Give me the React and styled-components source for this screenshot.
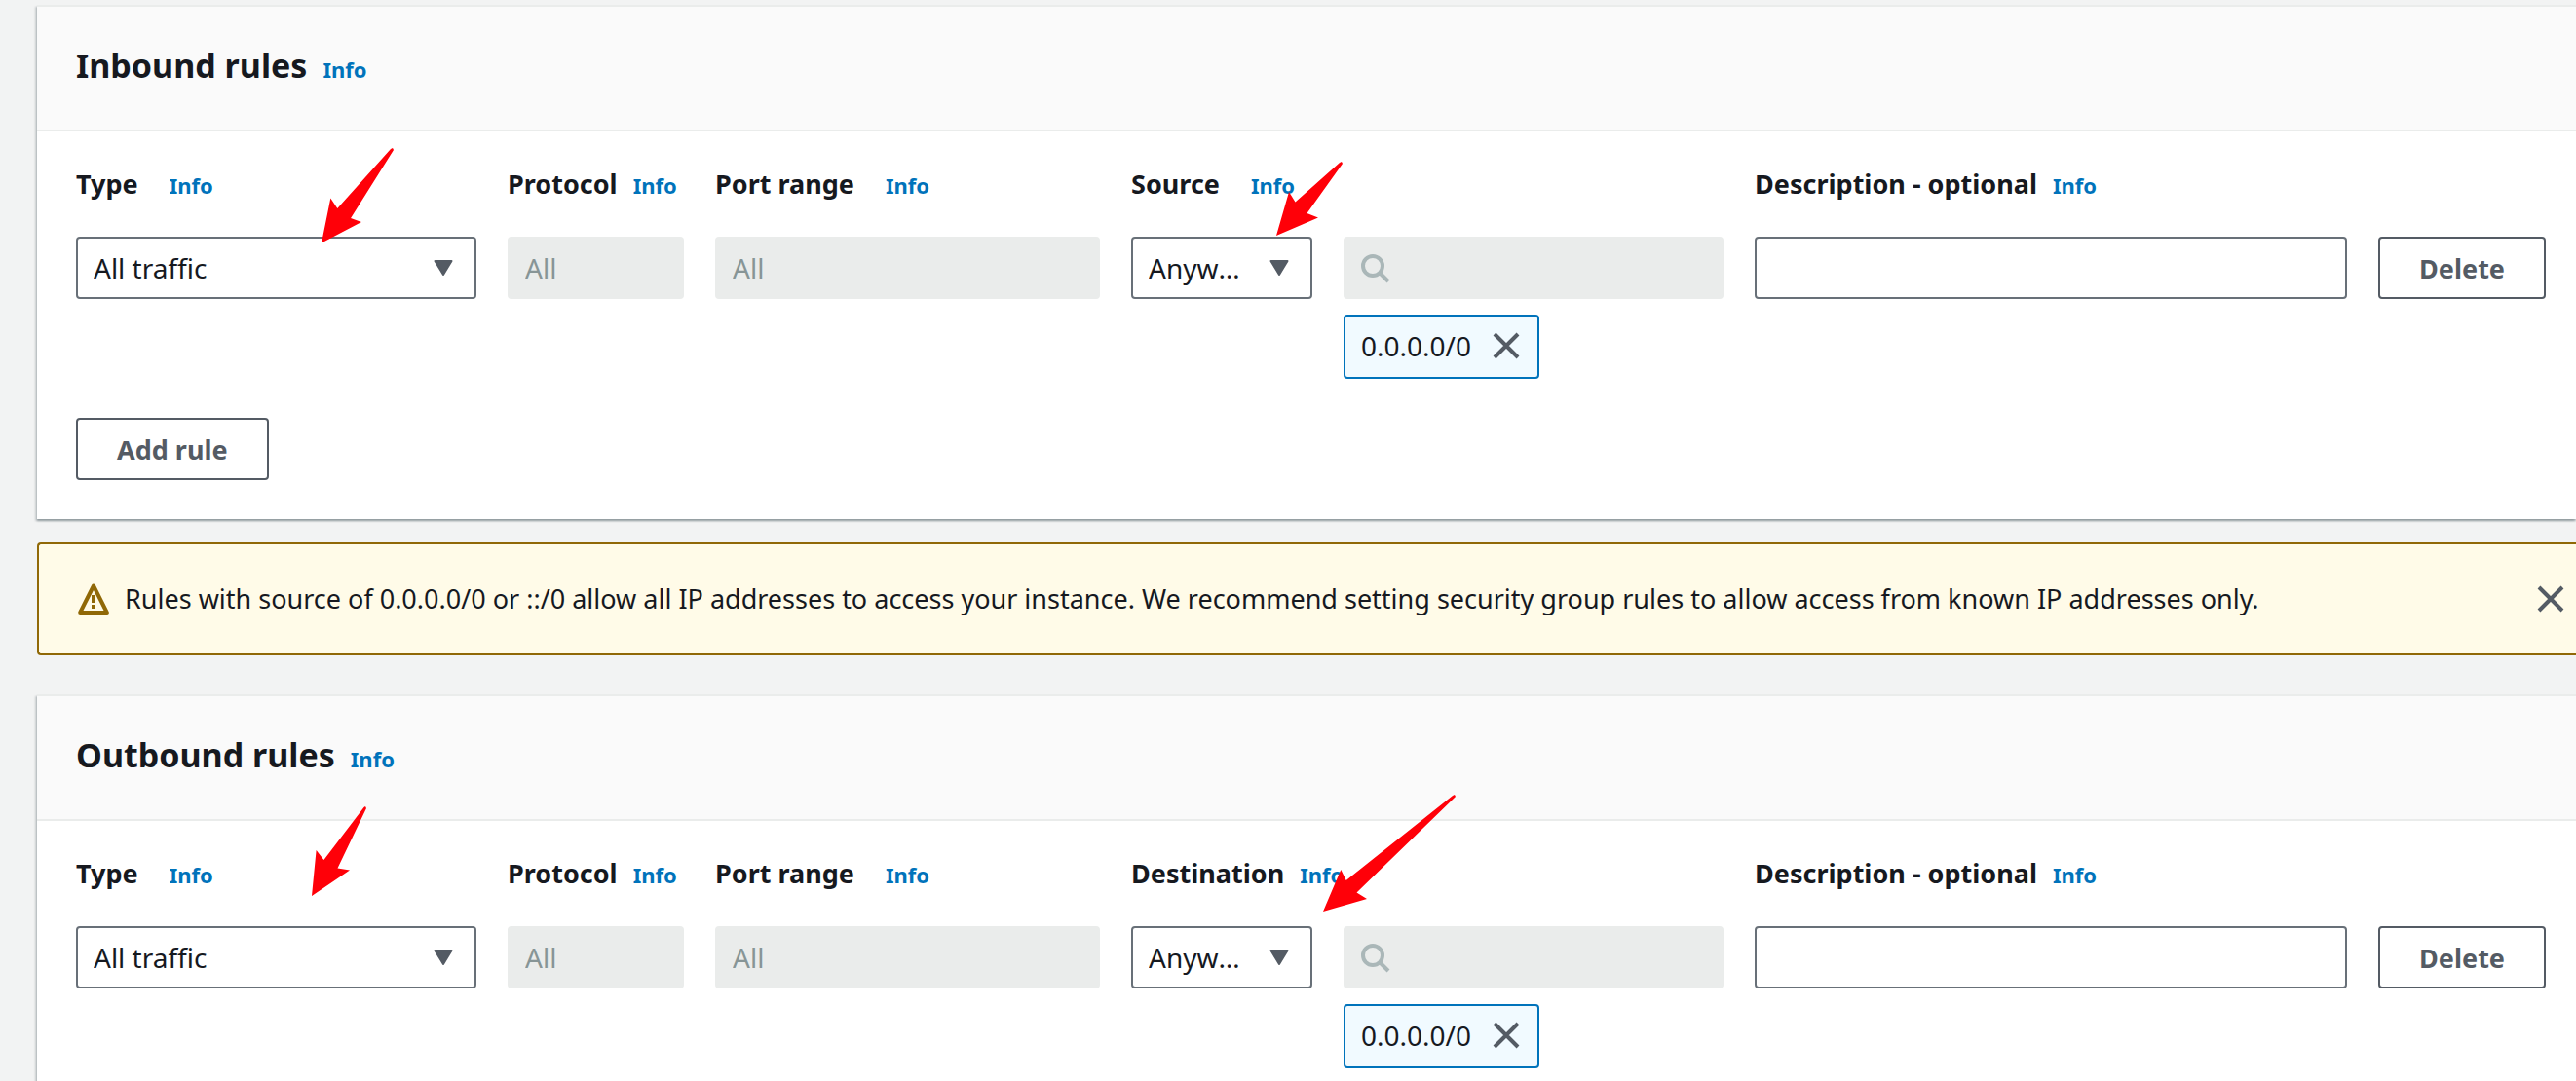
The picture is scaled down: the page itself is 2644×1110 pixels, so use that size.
import React from "react";
import styled, { createGlobalStyle, css } from "styled-components";

const color = {
  page: "#f2f3f3",
  panel: "#ffffff",
  header: "#fafafa",
  divider: "#eaeceb",
  text: "#16191f",
  muted: "#879596",
  disabled: "#eaeceb",
  control: "#687078",
  button: "#545b64",
  link: "#0073bb",
  warning: "#906806",
};

const GlobalStyle = createGlobalStyle`
  *, *::before, *::after { box-sizing: border-box; }
  body {
    margin: 0;
    background: ${color.page};
    color: ${color.text};
    font-family: "Noto Sans", "Open Sans", sans-serif;
    font-size: 28px;
  }
  input, select, button { font-family: inherit; margin: 0; }
`;

const Page = styled.main`
  position: relative;
  height: 100vh;
  overflow: hidden;
  padding: 5px 0 0 38px;
`;

const Panel = styled.section`
  background: ${color.panel};
  border-top: 2px solid ${color.divider};
  box-shadow: 0 2px 2px rgba(0, 28, 36, 0.3), -2px 2px 2px rgba(0, 28, 36, 0.15);
`;

const PanelHeader = styled.header`
  display: flex;
  align-items: baseline;
  gap: 16px;
  padding: 38px 40px 44px;
  background: ${color.header};
  border-bottom: 2px solid ${color.divider};
`;

const Title = styled.h2`
  margin: 0;
  font-size: 34px;
  font-weight: 700;
  line-height: 44px;
`;

const InfoLink = styled.a`
  color: ${color.link};
  font-size: 22px;
  font-weight: 700;
  line-height: 32px;
  text-decoration: none;
`;

const PanelBody = styled.div`
  display: flex;
  flex-direction: column;
  align-items: stretch;
  gap: 40px;
  padding: 34px 31px 40px 40px;
`;

const RuleGrid = styled.div`
  display: grid;
  grid-template-columns: 411fr 181fr 395fr 608fr 608fr auto;
  gap: 34px 32px;
  align-items: start;
`;

const LabelCell = styled.div`
  grid-row: 1;
  display: flex;
  align-items: baseline;
  gap: ${(p) => (p.$wide ? "32px" : "16px")};
  min-width: 0;
  white-space: nowrap;
`;

const Label = styled.label`
  font-size: 27px;
  font-weight: 700;
  line-height: 40px;
`;

const ControlCell = styled.div`
  grid-row: 2;
  min-width: 0;
`;

const PeerControls = styled.div`
  display: grid;
  grid-template-columns: 186fr 390fr;
  gap: 32px;
  align-items: start;
`;

const PeerColumn = styled.div`
  display: flex;
  flex-direction: column;
  align-items: flex-start;
  gap: 16px;
  min-width: 0;
`;

const Anchor = styled.div`
  position: relative;
  width: 100%;
`;

const controlBox = css`
  display: block;
  width: 100%;
  height: 64px;
  padding: 0 16px;
  border: 2px solid ${color.control};
  border-radius: 4px;
  background: ${color.panel};
  color: ${color.text};
  font-size: 28px;
`;

const Select = styled.select`
  ${controlBox}
  padding-right: 68px;
  appearance: none;
  overflow: hidden;
  text-overflow: ellipsis;
  white-space: nowrap;
`;

const TextInput = styled.input`
  ${controlBox}
  &:disabled {
    border-color: ${color.disabled};
    background: ${color.disabled};
    color: ${color.muted};
  }
`;

const SearchInput = styled(TextInput)`
  padding-left: 64px;
`;

const Caret = styled.svg`
  position: absolute;
  top: 24px;
  right: 24px;
  width: 20px;
  height: 16px;
  pointer-events: none;
`;

const SearchGlyph = styled.svg`
  position: absolute;
  top: 16px;
  left: 16px;
  width: 32px;
  height: 32px;
  pointer-events: none;
`;

const Token = styled.div`
  display: flex;
  align-items: center;
  gap: 20px;
  padding: 8px 16px 10px;
  border: 2px solid ${color.link};
  border-radius: 4px;
  background: #f1faff;
  line-height: 44px;
`;

const IconButton = styled.button`
  display: flex;
  padding: 0;
  border: 0;
  background: none;
  color: ${color.button};
`;

const Glyph = styled.svg`
  display: block;
  flex: none;
  width: 32px;
  height: 32px;
`;

const Button = styled.button`
  height: 64px;
  padding: 0 40px;
  border: 2px solid ${color.button};
  border-radius: 4px;
  background: ${color.panel};
  color: ${color.button};
  font-size: 27px;
  font-weight: 700;
  white-space: nowrap;
`;

const Actions = styled.div`
  display: flex;
`;

const Alert = styled.div`
  display: flex;
  align-items: center;
  gap: 16px;
  margin: 24px 0 40px;
  padding: 36px 10px 36px 40px;
  border: 2px solid ${color.warning};
  border-right: 0;
  border-radius: 4px 0 0 4px;
  background: #fffbe8;
  color: ${color.warning};
`;

const AlertText = styled.p`
  flex: 1;
  margin: 0;
  color: ${color.text};
  font-size: 27px;
  line-height: 40px;
`;

const ArrowLayer = styled.svg`
  position: absolute;
  top: 0;
  left: 0;
  width: 100%;
  height: 100%;
  pointer-events: none;
`;

const arrows = [
  "401,153 403,152 404,154 360,224 371,228 330,249.500 339.300,203.500 346.300,214",
  "1375,167 1377,166 1378,168 1341.500,219 1353,223.500 1310,242 1323,197 1329.500,207.500",
  "373.500,829 375,828 376,830 346.500,891.500 359,893.500 320,920 324.600,873 332.400,883",
  "1491,817 1493,816 1494,818 1392.500,916.500 1403,923 1358,936 1376.300,893 1381.700,904",
];

function CloseIcon() {
  return (
    <Glyph viewBox="0 0 32 32" aria-hidden="true">
      <path d="M4 4 28 28M28 4 4 28" stroke="currentColor" strokeWidth="4" fill="none" />
    </Glyph>
  );
}

function WarningIcon() {
  return (
    <Glyph viewBox="0 0 32 32" aria-hidden="true">
      <path d="M16 2.500 29.800 30H2.200Z" fill="none" stroke="currentColor" strokeWidth="4" strokeLinejoin="round" />
      <path d="M16 12v8M16 22v4" stroke="currentColor" strokeWidth="4" fill="none" />
    </Glyph>
  );
}

function Dropdown({ id, label, options }) {
  return (
    <Anchor>
      <Select id={id} aria-label={label}>
        {options.map((option) => (
          <option key={option}>{option}</option>
        ))}
      </Select>
      <Caret viewBox="0 0 20 16" aria-hidden="true">
        <path d="M1.500 1h17L10 15Z" fill={color.button} stroke={color.button} strokeWidth="2" strokeLinejoin="round" />
      </Caret>
    </Anchor>
  );
}

function FieldLabel({ htmlFor, wide, children }) {
  return (
    <LabelCell $wide={wide}>
      <Label htmlFor={htmlFor}>{children}</Label>
      <InfoLink href="#info">Info</InfoLink>
    </LabelCell>
  );
}

function RulesPanel({ id, title, peer, peerWide, footer }) {
  return (
    <Panel aria-labelledby={`${id}-title`}>
      <PanelHeader>
        <Title id={`${id}-title`}>{title}</Title>
        <InfoLink href="#info">Info</InfoLink>
      </PanelHeader>
      <PanelBody>
        <RuleGrid>
          <FieldLabel htmlFor={`${id}-type`} wide>Type</FieldLabel>
          <FieldLabel htmlFor={`${id}-protocol`}>Protocol</FieldLabel>
          <FieldLabel htmlFor={`${id}-port`} wide>Port range</FieldLabel>
          <FieldLabel htmlFor={`${id}-peer`} wide={peerWide}>{peer}</FieldLabel>
          <FieldLabel htmlFor={`${id}-description`}>Description - optional</FieldLabel>

          <ControlCell>
            <Dropdown id={`${id}-type`} options={["All traffic"]} />
          </ControlCell>
          <ControlCell>
            <TextInput id={`${id}-protocol`} defaultValue="All" disabled />
          </ControlCell>
          <ControlCell>
            <TextInput id={`${id}-port`} defaultValue="All" disabled />
          </ControlCell>
          <ControlCell>
            <PeerControls>
              <Dropdown id={`${id}-peer`} options={["Anywhere"]} />
              <PeerColumn>
                <Anchor>
                  <SearchInput type="search" aria-label={`${peer} address`} disabled />
                  <SearchGlyph viewBox="0 0 32 32" fill="none" stroke="#aab7b8" strokeWidth="4" aria-hidden="true">
                    <circle cx="14" cy="14" r="10" />
                    <path d="M21 21 30 30" />
                  </SearchGlyph>
                </Anchor>
                <Token>
                  <span>0.0.0.0/0</span>
                  <IconButton type="button" aria-label="Remove 0.0.0.0/0">
                    <CloseIcon />
                  </IconButton>
                </Token>
              </PeerColumn>
            </PeerControls>
          </ControlCell>
          <ControlCell>
            <TextInput id={`${id}-description`} type="text" />
          </ControlCell>
          <ControlCell>
            <Button type="button">Delete</Button>
          </ControlCell>
        </RuleGrid>
        {footer}
      </PanelBody>
    </Panel>
  );
}

export default function App() {
  return (
    <>
      <GlobalStyle />
      <Page>
        <RulesPanel
          id="inbound"
          title="Inbound rules"
          peer="Source"
          peerWide
          footer={
            <Actions>
              <Button type="button">Add rule</Button>
            </Actions>
          }
        />
        <Alert role="alert">
          <WarningIcon />
          <AlertText>
            Rules with source of 0.0.0.0/0 or ::/0 allow all IP addresses to access your instance. We recommend
            setting security group rules to allow access from known IP addresses only.
          </AlertText>
          <IconButton type="button" aria-label="Dismiss">
            <CloseIcon />
          </IconButton>
        </Alert>
        <RulesPanel id="outbound" title="Outbound rules" peer="Destination" />
        <ArrowLayer aria-hidden="true">
          {arrows.map((points) => (
            <polygon key={points} points={points} fill="#ff0008" />
          ))}
        </ArrowLayer>
      </Page>
    </>
  );
}
